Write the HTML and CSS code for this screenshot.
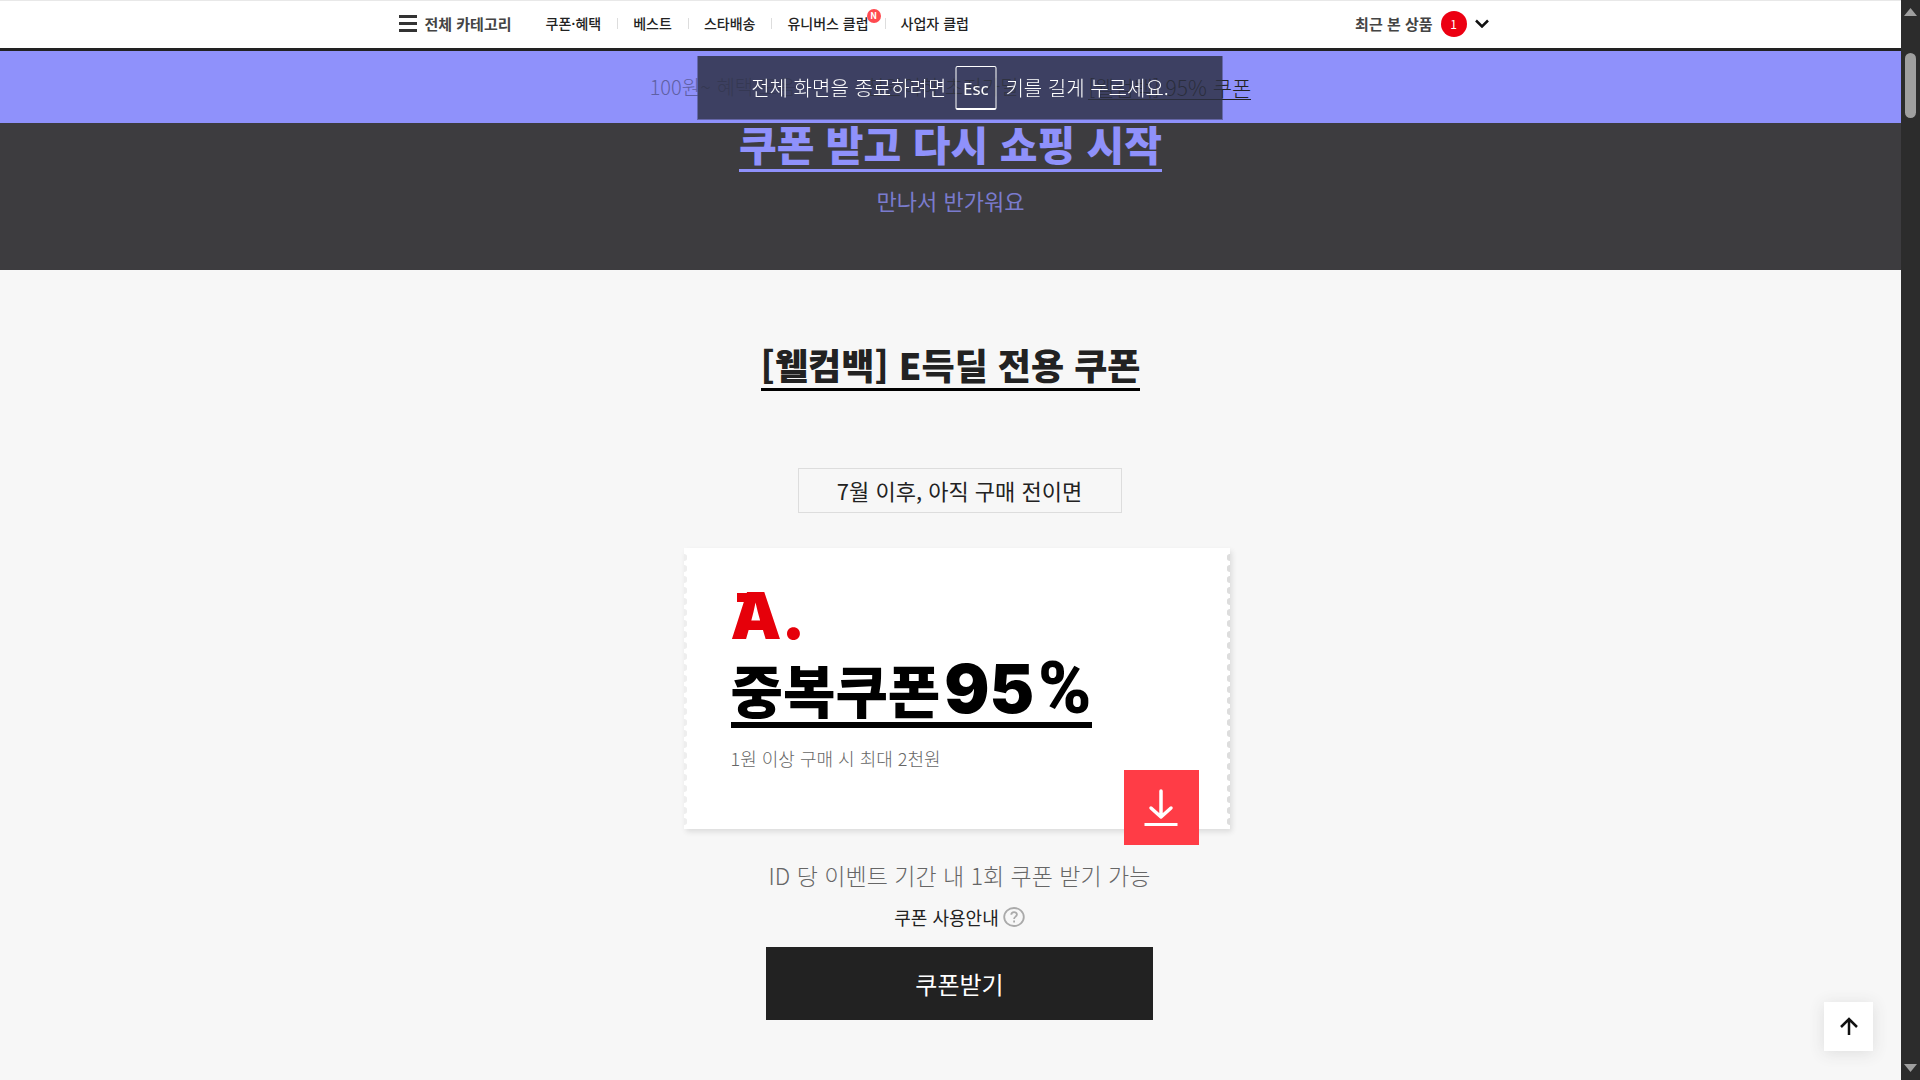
FILE: index.html
```html
<!DOCTYPE html>
<html lang="ko">
<head>
    <meta charset="UTF-8">
    <title>웰컴백 쿠폰</title>
    <link rel="stylesheet" href="styles.css">
</head>
<body>
    <div id="page">
        <!-- Sticky header -->
        <header>
            <div class="header-inner">
                <button class="category">
                    <svg width="18" height="17" viewBox="0 0 18 17"><path d="M0 1.5h18M0 8.500h18M0 15.500h18" stroke="#333" stroke-width="3"/></svg>
                    전체 카테고리
                </button>
                <nav>
                    <a href="#">쿠폰·혜택</a>
                    <a href="#">베스트</a>
                    <a href="#">스타배송</a>
                    <a href="#">유니버스 클럽<span class="new">N</span></a>
                    <a href="#">사업자 클럽</a>
                </nav>
                <button class="recent">
                    최근 본 상품
                    <span class="count">1</span>
                    <svg width="14" height="9" viewBox="0 0 14 9"><path d="M1 1.500l6 6 6-6" fill="none" stroke="#111" stroke-width="2.500"/></svg>
                </button>
            </div>
        </header>

        <!-- Event banner -->
        <div class="banner">
            <span>100원~ 혜택 모음</span>
            <span class="dark">천원이하 초저가딜</span>
            <a href="#coupon">[웰컴백] 95% 쿠폰</a>
        </div>
        <section class="hero">
            <h1>쿠폰 받고 다시 쇼핑 시작</h1>
            <p>만나서 반가워요</p>
        </section>

        <!-- Coupon -->
        <main id="coupon">
            <h2>[웰컴백] E득딜 전용 쿠폰</h2>
            <div class="coupon-area">
                <p class="condition">7월 이후, 아직 구매 전이면</p>
                <article class="coupon">
                    <p class="letter">A.</p>
                    <h3>중복쿠폰<span class="number">95</span><span class="percent">%</span></h3>
                    <p class="limit">1원 이상 구매 시 최대 2천원</p>
                    <button class="download" aria-label="쿠폰 다운로드">
                        <svg width="34" height="38" viewBox="0 0 34 38" fill="none" stroke="#fff" stroke-width="3.500" stroke-linecap="round" stroke-linejoin="round"><path d="M17 2v26M7 19l10 9 10-9"/><path d="M2 35.500h30" stroke-linecap="square" stroke-width="3"/></svg>
                    </button>
                </article>
                <p class="notice">ID 당 이벤트 기간 내 1회 쿠폰 받기 가능</p>
                <a class="guide" href="#">쿠폰 사용안내
                    <svg width="22" height="20" viewBox="0 0 22 20" fill="none" stroke="#aaa"><ellipse cx="11" cy="10" rx="9.800" ry="9" stroke-width="1.800"/><path d="M8.300 7.800c0-3.500 5.600-3.500 5.600-.2 0 2-2.800 2.100-2.800 4.400M11.100 13.500v2" stroke-width="1.800"/></svg>
                </a>
                <button class="get">쿠폰받기</button>
            </div>
        </main>
    </div>

    <!-- Scrollbar -->
    <div class="scrollbar">
        <svg width="13" height="8" viewBox="0 0 13 8"><path d="M6.500 0L13 8H0z" fill="#9f9f9f"/></svg>
        <div class="thumb"></div>
        <svg width="13" height="8" viewBox="0 0 13 8"><path d="M0 0h13L6.500 8z" fill="#9f9f9f"/></svg>
    </div>

    <button class="to-top" aria-label="맨 위로">
        <svg width="18" height="19" viewBox="0 0 18 19"><path d="M9 18V2M1 10l8-8 8 8" fill="none" stroke="#111" stroke-width="2.500"/></svg>
    </button>

    <!-- Full screen message -->
    <div class="fullscreen-tip">
        전체 화면을 종료하려면 <kbd>Esc</kbd> 키를 길게 누르세요.
    </div>
</body>
</html>
```
FILE: styles.css
```css
* {
    box-sizing: border-box;
}

body {
    display: flex;
    min-height: 100vh;
    margin: 0;
    background: #f7f7f7;
    color: #222;
    font-family: "Noto Sans CJK KR", sans-serif;
}

h1, h2, h3, p {
    margin: 0;
}

a {
    color: inherit;
    text-decoration: none;
}

button {
    padding: 0;
    border: 0;
    background: none;
    color: inherit;
    font-family: inherit;
    cursor: pointer;
}

#page {
    flex: 1;
}

/* Header */
header {
    height: 51px;
    border-top: 1px solid #e8e8e8;
    border-bottom: 3px solid #222;
    background: #fff;
}

.header-inner {
    display: flex;
    align-items: center;
    width: 1104px;
    max-width: 100%;
    height: 100%;
    margin: 0 auto;
    padding-bottom: 2px;
}

.category, .recent {
    display: flex;
    align-items: center;
    gap: 8px;
    font-size: 15px;
    font-weight: 700;
    color: #444;
}

nav {
    display: flex;
    gap: 32px;
    margin-left: 34px;
    padding-bottom: 2px;
    font-size: 14px;
    font-weight: 500;
    line-height: 20px;
}

nav a {
    position: relative;
}

nav a + a::before {
    content: "";
    position: absolute;
    left: -16px;
    top: 5px;
    height: 11px;
    border-left: 1px solid #ddd;
}

.new {
    position: absolute;
    top: -4px;
    right: -12px;
    width: 14px;
    height: 14px;
    border-radius: 50%;
    background: #ff4a50;
    color: #fff;
    font-size: 9px;
    font-weight: 700;
    line-height: 14px;
    text-align: center;
}

.recent {
    margin-left: auto;
    margin-right: 14px;
}

.count {
    width: 26px;
    height: 26px;
    border-radius: 50%;
    background: #ec0012;
    color: #fff;
    font-size: 12px;
    font-weight: 400;
    line-height: 25px;
}

/* Banner */
.banner {
    display: flex;
    align-items: center;
    justify-content: center;
    gap: 70px;
    height: 72px;
    background: #8f91fb;
    color: #5f60a4;
    font-size: 20px;
    font-weight: 300;
    line-height: 24px;
}

.banner .dark {
    color: #444;
}

.banner a {
    border-bottom: 1px solid #222;
    color: #222;
    font-size: 21px;
}

.hero {
    height: 147px;
    background: #3d3c3f;
    color: #8f91fb;
    text-align: center;
}

.hero h1 {
    display: inline-block;
    height: 49px;
    border-bottom: 3px solid #8f91fb;
    font-size: 41px;
    font-weight: 900;
    line-height: 40px;
}

.hero p {
    margin-top: 8px;
    color: #7a7bcd;
    font-size: 22px;
    line-height: 40px;
}

/* Coupon */
main {
    padding-top: 70px;
    padding-bottom: 60px;
    text-align: center;
}

main h2 {
    display: inline-block;
    height: 51px;
    border-bottom: 3px solid #000;
    font-size: 36px;
    font-weight: 900;
    line-height: 48px;
}

.coupon-area {
    display: flex;
    flex-direction: column;
    align-items: center;
    padding-left: 18px;
    margin-top: 77px;
}

.condition {
    width: 324px;
    height: 45px;
    border: 1px solid #ddd;
    font-size: 22px;
    line-height: 42px;
}

.coupon {
    position: relative;
    width: 546px;
    height: 281px;
    margin-top: 35px;
    margin-right: 6px;
    padding: 36px 47px;
    background: #fff;
    box-shadow: 2px 3px 5px #ddd;
    text-align: left;
}

/* Perforated sides */
.coupon::before, .coupon::after {
    content: "";
    position: absolute;
    top: 4px;
    bottom: 4px;
    left: 0;
    width: 3px;
    background: radial-gradient(circle at 0 50%, #eee 3px, transparent 4px) 0 0 / 3px 11px;
}

.coupon::after {
    left: auto;
    right: 0;
    background: radial-gradient(circle at 100% 50%, #ddd 3px, transparent 4px) 0 0 / 3px 11px;
}

.letter {
    position: relative;
    color: #e6000a;
    font-family: Inter, sans-serif;
    font-size: 64px;
    font-weight: 900;
    line-height: 64px;
}

/* Serif of the letter */
.letter::before {
    content: "";
    position: absolute;
    left: 6px;
    top: 9px;
    width: 14px;
    height: 9px;
    background: #e6000a;
}

.coupon h3 {
    display: inline-block;
    height: 80px;
    border-bottom: 6px solid #000;
    color: #000;
    font-size: 57px;
    font-weight: 900;
    line-height: 80px;
    white-space: nowrap;
}

.number {
    margin: 0 4px;
    font-family: Inter, sans-serif;
    font-size: 67px;
}

.percent {
    font-family: Roboto, sans-serif;
    font-size: 72px;
}

.limit {
    margin-top: 16px;
    color: #666;
    font-size: 18px;
    font-weight: 300;
    line-height: 28px;
}

.download {
    position: absolute;
    right: 31px;
    bottom: -16px;
    display: flex;
    align-items: center;
    justify-content: center;
    width: 75px;
    height: 75px;
    background: #ff3c46;
}

.notice {
    margin-top: 28px;
    color: #666;
    font-size: 23px;
    font-weight: 300;
    line-height: 36px;
}

.guide {
    display: flex;
    align-items: center;
    gap: 4px;
    margin-top: 10px;
    font-size: 18px;
    line-height: 28px;
}

.get {
    width: 387px;
    height: 73px;
    margin-top: 16px;
    background: #222;
    color: #fff;
    font-size: 24px;
}

/* Scrollbar */
.scrollbar {
    position: sticky;
    top: 0;
    display: flex;
    flex-direction: column;
    align-items: center;
    width: 19px;
    height: 100vh;
    padding: 8px 0;
    background: #2c2c2c;
}

.thumb {
    width: 11px;
    height: 65px;
    margin-top: 37px;
    margin-bottom: auto;
    border-radius: 6px;
    background: #9f9f9f;
}

.to-top {
    position: fixed;
    right: 47px;
    bottom: 29px;
    display: flex;
    align-items: center;
    justify-content: center;
    width: 49px;
    height: 49px;
    background: #fff;
    box-shadow: 0 2px 16px #ddd;
}

/* Full screen message */
.fullscreen-tip {
    position: fixed;
    top: 56px;
    left: 50%;
    display: flex;
    align-items: center;
    justify-content: center;
    gap: 9px;
    width: 525px;
    height: 64px;
    border-bottom: 1px solid #6465a6;
    background: rgba(44, 48, 66, 0.83);
    color: #fff;
    font-size: 20px;
    font-weight: 300;
    transform: translateX(-50%);
    white-space: nowrap;
}

kbd {
    width: 41px;
    height: 44px;
    border: 1px solid #fff;
    border-bottom-width: 2px;
    border-radius: 2px;
    font-family: "Noto Sans", sans-serif;
    font-size: 17px;
    font-weight: 400;
    line-height: 43px;
    text-align: center;
}
```
